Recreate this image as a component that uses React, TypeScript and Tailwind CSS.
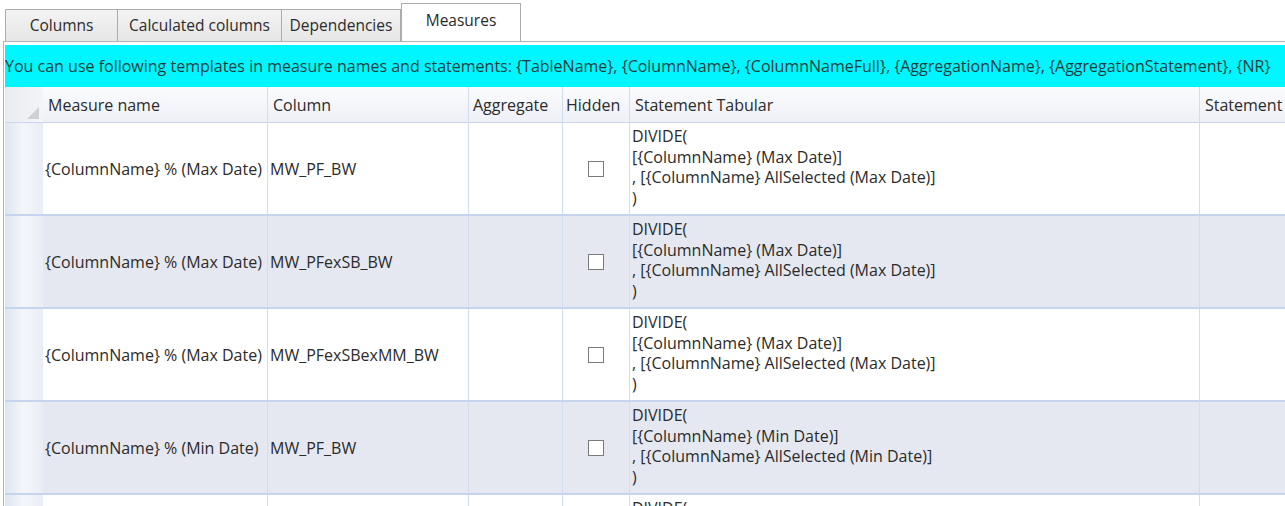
type Row = {
  name: string;
  column: string;
  date: string;
};

const rows: Row[] = [
  { name: "{ColumnName} % (Max Date)", column: "MW_PF_BW", date: "Max Date" },
  { name: "{ColumnName} % (Max Date)", column: "MW_PFexSB_BW", date: "Max Date" },
  { name: "{ColumnName} % (Max Date)", column: "MW_PFexSBexMM_BW", date: "Max Date" },
  { name: "{ColumnName} % (Min Date)", column: "MW_PF_BW", date: "Min Date" },
  { name: "{ColumnName} % (Min Date)", column: "MW_PFexSB_BW", date: "Min Date" },
];

const tabs = ["Columns", "Calculated columns", "Dependencies", "Measures"];
const tabWidths = ["w-[113px]", "w-[165px]", "w-[120px]", "w-[120px]"];

function Tab({ label, width, active }: { label: string; width: string; active: boolean }) {
  return (
    <div
      className={`${width} flex items-center justify-center border border-b-0 border-[#acacac] ${
        active ? "h-[38px] bg-white pb-[4px]" : "h-[32px] bg-gradient-to-b from-[#f3f3f3] to-[#e6e6e6] -ml-px first:ml-0"
      }`}
    >
      {label}
    </div>
  );
}

export default function App() {
  return (
    <div className="w-[1285px] h-[506px] overflow-hidden bg-white font-['Open_Sans',sans-serif] text-[16px] text-[#2b2b2b]">
      {/* Tabs Header */}
      <div className="flex items-end h-[41px] pl-[5px] text-[15.5px]">
        {tabs.map((t, i) => (
          <Tab key={t} label={t} width={tabWidths[i]} active={t === "Measures"} />
        ))}
      </div>

      {/* Panel */}
      <div className="ml-[3px] border-l border-t border-[#b4b4b4] pt-[3px] pl-[1px]">
        <div className="h-[42px] bg-[#00f6ff] flex items-center whitespace-nowrap text-[#1c3a3a]">
          You can use following templates in measure names and statements: {"{TableName}"}, {"{ColumnName}"}, {"{ColumnNameFull}"}, {"{AggregationName}"}, {"{AggregationStatement}"}, {"{NR}"}
        </div>

        {/* Grid header */}
        <div className="flex h-[36px] border-b border-[#c9d6ee] bg-gradient-to-b from-[#fbfcfe] to-[#edf0f6] whitespace-nowrap">
          <div className="w-[38px] shrink-0 relative bg-gradient-to-r from-[#e8ebf0] to-[#f3f5f8]">
            <div className="absolute right-[4px] bottom-[3px] w-0 h-0 border-l-[12px] border-l-transparent border-b-[12px] border-b-[#cfd1d4]" />
          </div>
          <div className="w-[225px] shrink-0 border-r border-[#d3ddef] flex items-center pl-[5px]">Measure name</div>
          <div className="w-[201px] shrink-0 border-r border-[#d3ddef] flex items-center pl-[5px]">Column</div>
          <div className="w-[94px] shrink-0 border-r border-[#d3ddef] flex items-center pl-[4px]">Aggregate</div>
          <div className="w-[67px] shrink-0 border-r border-[#d3ddef] flex items-center pl-[3px]">Hidden</div>
          <div className="w-[570px] shrink-0 border-r border-[#d3ddef] flex items-center pl-[5px]">Statement Tabular</div>
          <div className="flex-1 flex items-center pl-[5px]">Statement</div>
        </div>

        {/* Rows */}
        {rows.map((r, i) => (
          <div
            key={i}
            className={`flex h-[93px] border-b-2 border-[#c6d4ee] whitespace-nowrap ${
              i % 2 === 1 ? "bg-[#e5e8f0]" : "bg-white"
            }`}
          >
            <div className="w-[38px] shrink-0 bg-gradient-to-r from-[#dfe6f2] via-[#f4f6fa] to-[#e9edf4]" />
            <div className="w-[225px] shrink-0 border-r border-[#d3ddef] flex items-center pl-[2px] overflow-hidden">
              {r.name}
            </div>
            <div className="w-[201px] shrink-0 border-r border-[#d3ddef] flex items-center pl-[2px] overflow-hidden">
              {r.column}
            </div>
            <div className="w-[94px] shrink-0 border-r border-[#d3ddef]" />
            <div className="w-[67px] shrink-0 border-r border-[#d3ddef] flex items-center justify-center">
              <div className="w-[16px] h-[16px] border border-[#7a7a7a] bg-white" />
            </div>
            <div className="w-[570px] shrink-0 border-r border-[#d3ddef] pl-[2px] pt-[3px] leading-[20.7px] overflow-hidden">
              <div>DIVIDE(</div>
              <div>[{"{ColumnName}"} ({r.date})]</div>
              <div>, [{"{ColumnName}"} AllSelected ({r.date})]</div>
              <div>)</div>
            </div>
            <div className="flex-1" />
          </div>
        ))}
      </div>
    </div>
  );
}
